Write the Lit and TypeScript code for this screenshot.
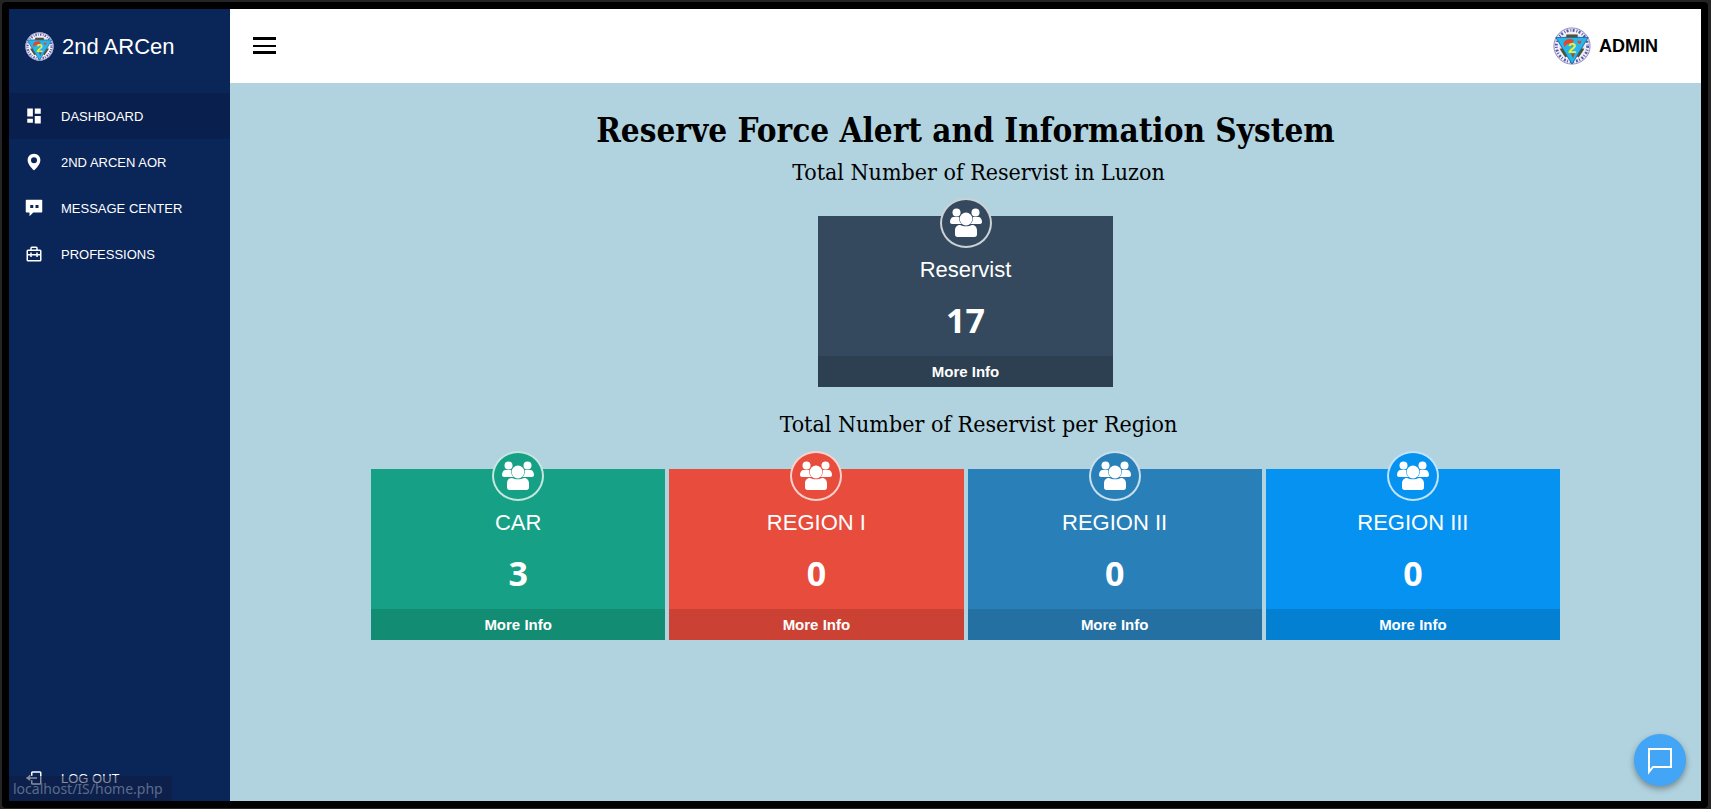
import { LitElement, html, svg, css } from "lit";
import { customElement, property } from "lit/decorators.js";

const icons = {
  dashboard: svg`<path d="M3 2h7.500v10.500H3zM3 15.500h7.500V21H3zM13 12h8v10h-8zM13 2h8v7h-8z"/>`,
  pin: svg`<path d="M12 1C7.200 1 3.500 4.700 3.500 9.500c0 6.400 8.200 13.300 8.500 13.500 0 0 8.500-7 8.500-13.500C20.500 4.700 16.800 1 12 1zm0 12.500a4 4 0 1 1 0-8 4 4 0 0 1 0 8z"/>`,
  message: svg`<path fill-rule="evenodd" d="M2 1h20a1 1 0 0 1 1 1v15a1 1 0 0 1-1 1H11l-5 5v-5H2a1 1 0 0 1-1-1V2a1 1 0 0 1 1-1zm5 7v4h4V8zm7 0v4h4V8z"/>`,
  briefcase: svg`<path fill-rule="evenodd" d="M9 2h6a2 2 0 0 1 2 2v2h3a2 2 0 0 1 2 2v12a2 2 0 0 1-2 2H4a2 2 0 0 1-2-2V8a2 2 0 0 1 2-2h3V4a2 2 0 0 1 2-2zm0 2v2h6V4zM4 8v4h3v-2h2v2h6v-2h2v2h3V8zm0 6v6h16v-6h-3v2h-2v-2H9v2H7v-2z"/>`,
  exit: svg`<path d="M20 3H10a2 2 0 0 0-2 2v4h2V5h10v14H10v-4H8v4a2 2 0 0 0 2 2h10a2 2 0 0 0 2-2V5a2 2 0 0 0-2-2z"/><path d="M7 16v-3h9v-2H7V8l-6 4z"/>`,
  people: svg`<circle cx="6.500" cy="4.500" r="4"/><circle cx="25.500" cy="4.500" r="4"/><path d="M3.500 9h5.500c0 4 1 5.500 2.500 7H2c-1 0-2-.8-2-2 0-3 1.500-5 3.500-5zM28.500 9H23c0 4-1 5.500-2.500 7H30c1 0 2-.8 2-2 0-3-1.500-5-3.500-5z"/><circle cx="16" cy="11" r="6.400"/><path d="M10 17c3.500 1.800 8.500 1.800 12 0 3.500 0 5 2.500 5 5.500v4c0 1.500-1 2.500-2.500 2.500h-17C6 29 5 28 5 26.500v-4c0-3 1.500-5.500 5-5.500z"/>`,
};

const seal = svg`
  <circle cx="20" cy="20" r="19.500" fill="#f1f0f8"/>
  <circle cx="20" cy="20" r="16.500" fill="none" stroke="#5a59a6" stroke-width="3" stroke-dasharray="2 2 1 1.500"/>
  <circle cx="20" cy="20" r="19" fill="none" stroke="#8986bd" stroke-width="1"/>
  <circle cx="20" cy="20" r="13" fill="#d8d9ef"/>
  <path d="M14 8h12v4H14zM7 23l5-1 4 8-3 2zM33 23l-5-1-4 8 3 2z" fill="#54502c"/>
  <path d="M3 11h34L20 39z" fill="#25b7ea" stroke="#2069a8" stroke-width="1"/>
  <path d="M11 17c2-5 8-5 11-3l-2 3-5 1-3 3z" fill="#e2472d"/>
  <path d="M26 14l2 1 2-1-1 4-3-1z" fill="#e2472d"/>
  <path d="M19 28h4l-2 5z" fill="#8a5438"/>
  <text x="20" y="27" text-anchor="middle" font-family="Liberation Sans" font-weight="700" font-size="16" fill="#f4ea2b">2</text>`;

@customElement("stat-card")
export class StatCard extends LitElement {
  @property() label = "";
  @property() value = "";
  @property({ reflect: true }) tone = "slate";

  static styles = css`
    :host { display: block; color: #fff; background: var(--tone); }
    :host([tone="slate"]) { --tone: #34495e; }
    :host([tone="green"]) { --tone: #16a085; }
    :host([tone="red"]) { --tone: #e74c3c; }
    :host([tone="blue"]) { --tone: #2980b9; }
    :host([tone="bright"]) { --tone: #0592f1; }
    .card { display: flex; flex-direction: column; align-items: center; text-align: center; }
    .badge {
      box-sizing: border-box; width: 52px; height: 50px; margin-top: -18px;
      display: grid; place-items: center; border-radius: 50%;
      border: 2px solid rgba(255, 255, 255, 0.75);
      background: var(--tone);
    }
    .badge svg { width: 32px; height: 29px; margin-bottom: 2px; fill: #fff; }
    .label { margin: 9px 0 0; font-size: 22px; line-height: 26px; font-weight: 400; }
    .value { margin: 15px 0 0; font: 700 34px/44px "Noto Sans", sans-serif; }
    .more {
      align-self: stretch; margin-top: 14px; background: rgba(0, 0, 0, 0.12);
      color: #fff; text-decoration: none; font-size: 15px; line-height: 31px; font-weight: 700;
    }
  `;

  render() {
    return html`<article class="card">
      <span class="badge"><svg viewBox="0 0 32 29" aria-hidden="true">${icons.people}</svg></span>
      <h3 class="label">${this.label}</h3>
      <p class="value">${this.value}</p>
      <a class="more" href="#">More Info</a>
    </article>`;
  }
}

@customElement("app-root")
export class AppRoot extends LitElement {
  static styles = css`
    :host { display: block; font-family: "Liberation Sans", Arial, sans-serif; }
    * { box-sizing: border-box; }
    .desk { min-height: 100vh; padding: 2px 3px 1px 2px; background: #242424; display: flex; }
    .bezel { flex: 1; display: flex; padding: 7px; background: #000; border-radius: 4px; }
    .app { position: relative; flex: 1; display: flex; background: #b1d3df; }
    .sidebar { width: 221px; flex: none; display: flex; flex-direction: column; background: #0a2558; color: #fff; }
    .brand { display: flex; align-items: center; gap: 8px; height: 84px; padding: 0 16px 9px; font-size: 22px; }
    .brand svg { width: 29px; height: 29px; }
    .links { flex: 1; display: flex; flex-direction: column; list-style: none; margin: 0; padding: 0; }
    .last { margin-top: auto; }
    .link {
      display: flex; align-items: center; gap: 18px; height: 46px; padding: 0 16px;
      color: #fff; text-decoration: none; font-size: 13px;
    }
    .link svg { width: 18px; height: 18px; fill: currentColor; }
    .link.active { background: #091f4d; }
    .main { flex: 1; min-width: 0; display: flex; flex-direction: column; }
    .top { display: flex; align-items: center; justify-content: space-between; height: 74px; padding: 0 43px 0 19px; background: #fff; }
    .menu { border: 0; padding: 0; background: none; width: 30px; height: 30px; }
    .menu svg { display: block; width: 30px; height: 30px; }
    .user { display: flex; align-items: center; gap: 8px; font-size: 18px; font-weight: 700; color: #000; }
    .user svg { width: 38px; height: 38px; }
    .content { display: flex; flex-direction: column; align-items: center; color: #000; padding: 24px 16px; }
    h1, h2 { margin: 0; text-align: center; font-family: "DejaVu Serif Condensed", "DejaVu Serif", serif; }
    h1 { font-size: 33px; line-height: 48px; font-weight: 700; }
    h2 { padding-left: 26px; font-size: 23px; line-height: 34px; font-weight: 400; }
    .total { width: 295px; margin: 27px 0 20px; }
    .regions {
      display: grid; grid-template-columns: repeat(4, 1fr); gap: 4px;
      width: 100%; max-width: 1189px; margin-top: 28px;
    }
    .chat {
      position: absolute; right: 15px; bottom: 15px; width: 52px; height: 52px; border: 0; padding: 0;
      display: grid; place-items: center; border-radius: 50%; background: #42a5f5;
      box-shadow: 0 3px 6px rgba(0, 0, 0, 0.35);
    }
    .chat svg { width: 30px; height: 30px; }
    .status {
      position: absolute; left: 0; bottom: 0; padding: 0 9px 0 4px; border-radius: 0 4px 0 0;
      background: rgba(13, 28, 62, 0.5); color: #5d6b8c;
      font: 14px/25px "Noto Sans", sans-serif;
    }
  `;

  private item(icon: unknown, label: string, cls = "") {
    return html`<a class="link ${cls}" href="#"><svg viewBox="0 0 24 24" aria-hidden="true">${icon}</svg><span>${label}</span></a>`;
  }

  render() {
    return html`<div class="desk"><div class="bezel"><div class="app">
      <nav class="sidebar">
        <div class="brand"><svg viewBox="0 0 40 40" aria-hidden="true">${seal}</svg><span>2nd ARCen</span></div>
        <ul class="links">
          <li>${this.item(icons.dashboard, "DASHBOARD", "active")}</li>
          <li>${this.item(icons.pin, "2ND ARCEN AOR")}</li>
          <li>${this.item(icons.message, "MESSAGE CENTER")}</li>
          <li>${this.item(icons.briefcase, "PROFESSIONS")}</li>
          <li class="last">${this.item(icons.exit, "LOG OUT")}</li>
        </ul>
      </nav>
      <div class="main">
        <header class="top">
          <button class="menu" aria-label="Toggle menu">
            <svg viewBox="0 0 30 30"><path d="M4 6h23v3H4zM4 14h23v2H4zM4 20h23v3H4z"/></svg>
          </button>
          <div class="user"><svg viewBox="0 0 40 40" aria-hidden="true">${seal}</svg><span>ADMIN</span></div>
        </header>
        <main class="content">
          <h1>Reserve Force Alert and Information System</h1>
          <h2>Total Number of Reservist in Luzon</h2>
          <stat-card class="total" tone="slate" label="Reservist" value="17"></stat-card>
          <h2>Total Number of Reservist per Region</h2>
          <section class="regions">
            <stat-card tone="green" label="CAR" value="3"></stat-card>
            <stat-card tone="red" label="REGION I" value="0"></stat-card>
            <stat-card tone="blue" label="REGION II" value="0"></stat-card>
            <stat-card tone="bright" label="REGION III" value="0"></stat-card>
          </section>
        </main>
      </div>
      <button class="chat" aria-label="Open chat">
        <svg viewBox="0 0 30 30" fill="none" stroke="#fff" stroke-width="2"><path d="M4 27V4h22v18H8z"/></svg>
      </button>
      <div class="status">localhost/IS/home.php</div>
    </div></div></div>`;
  }
}
